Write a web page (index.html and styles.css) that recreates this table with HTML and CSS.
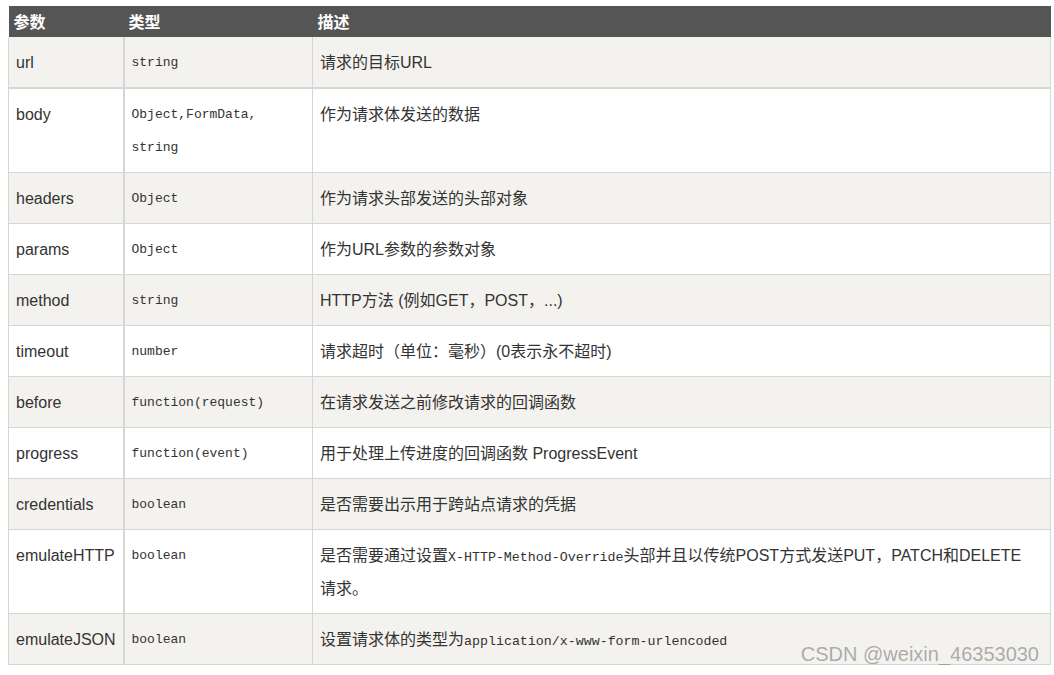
FILE: index.html
```html
<!DOCTYPE html>
<html lang="zh">
<head>
<meta charset="utf-8">
<link rel="stylesheet" href="styles.css">
</head>
<body>
<div class="wrap">
<table class="params">
  <colgroup>
    <col class="c1"><col class="c2"><col class="c3">
  </colgroup>
  <thead>
    <tr><th>参数</th><th>类型</th><th>描述</th></tr>
  </thead>
  <tbody>
    <tr><td>url</td><td class="mono">string</td><td>请求的目标URL</td></tr>
    <tr><td>body</td><td class="mono">Object,FormData,<br>string</td><td>作为请求体发送的数据</td></tr>
    <tr><td>headers</td><td class="mono">Object</td><td>作为请求头部发送的头部对象</td></tr>
    <tr><td>params</td><td class="mono">Object</td><td>作为URL参数的参数对象</td></tr>
    <tr><td>method</td><td class="mono">string</td><td>HTTP方法 (例如GET，POST，...)</td></tr>
    <tr><td>timeout</td><td class="mono">number</td><td>请求超时（单位：毫秒）(0表示永不超时)</td></tr>
    <tr><td>before</td><td class="mono">function(request)</td><td>在请求发送之前修改请求的回调函数</td></tr>
    <tr><td>progress</td><td class="mono">function(event)</td><td>用于处理上传进度的回调函数 ProgressEvent</td></tr>
    <tr><td>credentials</td><td class="mono">boolean</td><td>是否需要出示用于跨站点请求的凭据</td></tr>
    <tr><td>emulateHTTP</td><td class="mono">boolean</td><td>是否需要通过设置<code>X-HTTP-Method-Override</code>头部并且以传统POST方式发送PUT，PATCH和DELETE请求。</td></tr>
    <tr><td>emulateJSON</td><td class="mono">boolean</td><td>设置请求体的类型为<code>application/x-www-form-urlencoded</code></td></tr>
  </tbody>
</table>
<div class="watermark">CSDN @weixin_46353030</div>
</div>
</body>
</html>
```

FILE: styles.css
```css
html, body {
  margin: 0;
  padding: 0;
  background: #ffffff;
}
body {
  padding: 6px 4px 0 8px;
  font-family: "Liberation Sans", "Noto Sans CJK SC", sans-serif;
  color: #333333;
}
.wrap {
  position: relative;
  width: 1043px;
}
.params {
  width: 1043px;
  border-collapse: collapse;
  table-layout: fixed;
  font-size: 16px;
}
.c1 { width: 115px; }
.c2 { width: 189px; }
.params thead th {
  background: #555555;
  color: #ffffff;
  font-weight: bold;
  text-align: left;
  height: 31px;
  line-height: 31px;
  padding: 0 0 0 5px;
  font-family: "Noto Sans CJK SC", "Liberation Sans", sans-serif;
  font-size: 16px;
}
.params td {
  border: 1px solid #d6d6d6;
  padding: 9px 6px 8px 7px;
  line-height: 33px;
  vertical-align: top;
  font-family: "Liberation Sans", "Noto Sans CJK SC", sans-serif;
}
.params td:first-child {
  border-right: 2px solid #d6d6d6;
}
.params td:last-child {
  padding-right: 20px;
}
.params tbody tr:first-child td {
  border-top: none;
  border-bottom: 2px solid #d6d6d6;
}
.params tbody tr:nth-child(odd) td {
  background: #f3f2ee;
}
.params tbody tr:nth-child(even) td {
  background: #ffffff;
}
.params td.mono {
  font-family: "Liberation Mono", monospace;
  font-size: 13px;
}
.params code {
  font-family: "Liberation Mono", monospace;
  font-size: 13.3px;
  line-height: 1;
}
.watermark {
  position: absolute;
  right: 12px;
  bottom: 0;
  font-family: "Liberation Sans", sans-serif;
  font-size: 20px;
  color: rgba(110, 110, 110, 0.55);
  line-height: 22px;
}
```
